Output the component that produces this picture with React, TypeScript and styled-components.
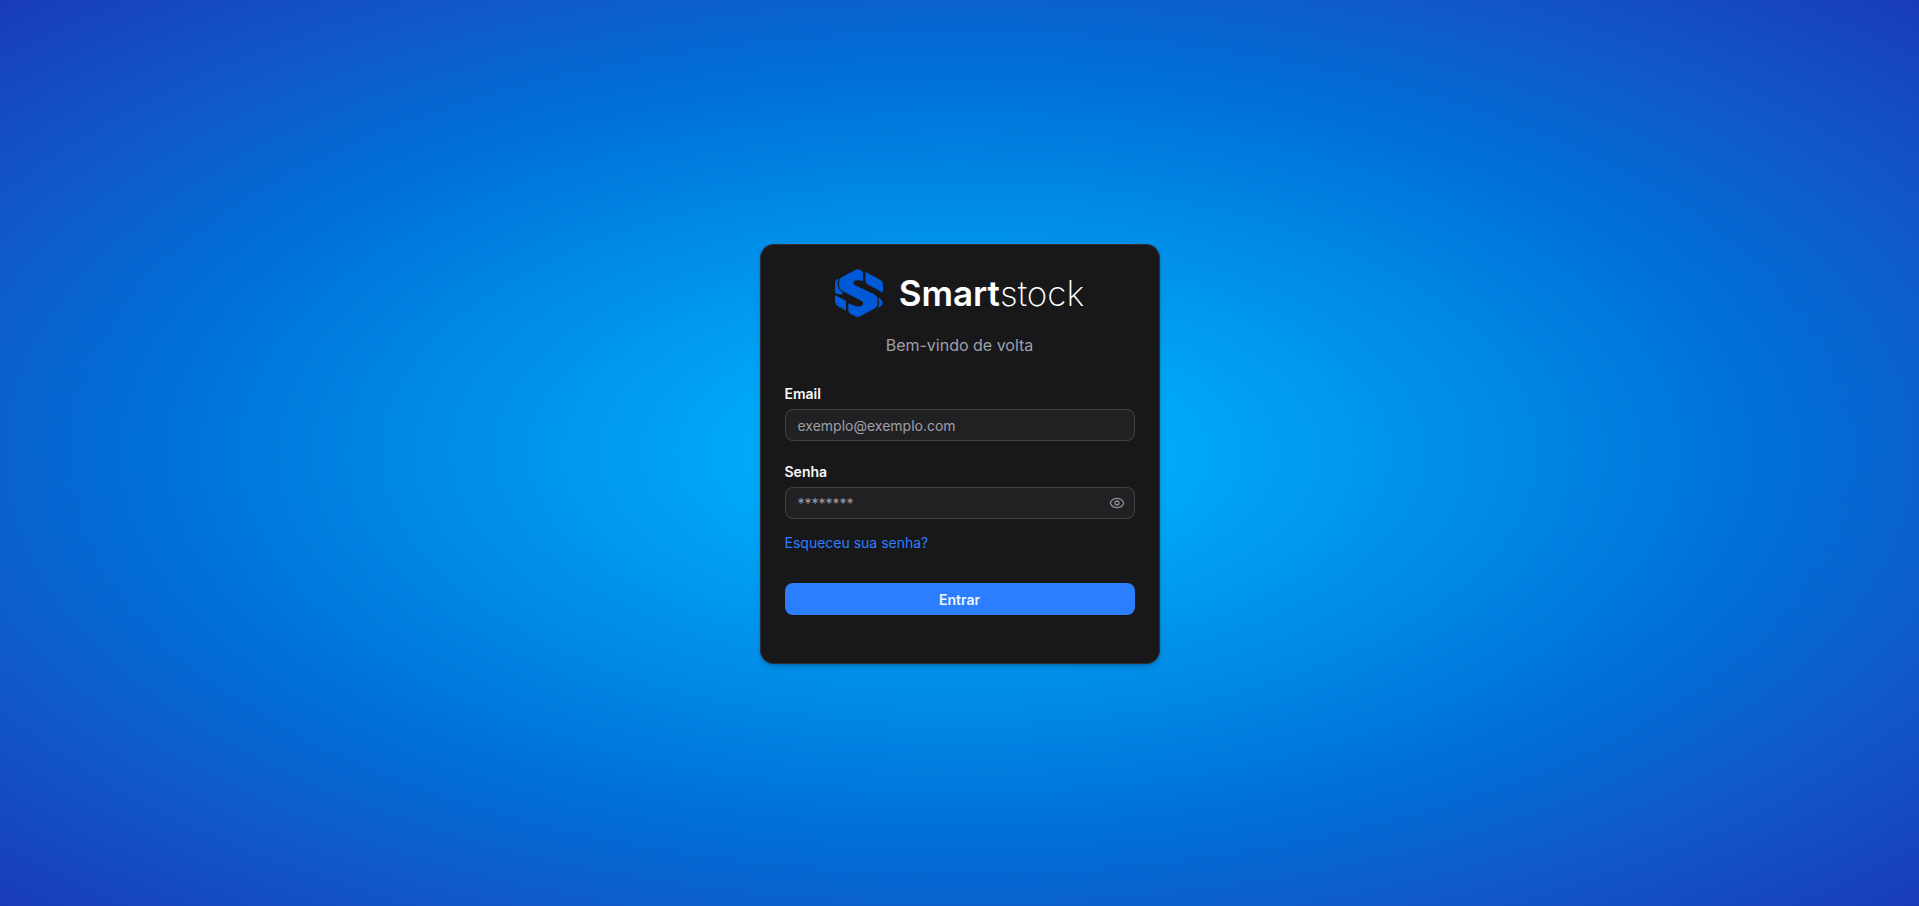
import React, { useState } from "react";
import styled, { createGlobalStyle } from "styled-components";
import { Eye, EyeOff } from "lucide-react";

const GlobalStyle = createGlobalStyle`
  *, *::before, *::after { box-sizing: border-box; }
  body { margin: 0; }
  body, input, button { font-family: Inter, "Liberation Sans", sans-serif; }
`;

const Page = styled.main`
  min-height: 100vh;
  display: flex;
  align-items: center;
  justify-content: center;
  padding: 18px 16px 16px;
  background-image: radial-gradient(
    #00bcff 0%,
    #00a9f9 15%,
    #006fd6 60%,
    #105acb 77%,
    #193cb8 100%
  );
`;

const Card = styled.section`
  width: 100%;
  max-width: 400px;
  padding: 24px 24px 48px;
  border: 1px solid rgb(255 255 255 / 10%);
  border-radius: 14px;
  background: #18181b;
  color: #fafafa;
  box-shadow: 0 1px 3px rgb(0 0 0 / 10%), 0 1px 2px rgb(0 0 0 / 10%),
    0 4px 6px rgb(0 0 0 / 10%);
`;

const Header = styled.header`
  display: flex;
  flex-direction: column;
  align-items: center;
  gap: 16px;
`;

const Brand = styled.div`
  display: flex;
  align-items: center;
  gap: 16px;
`;

const LogoMark = styled.svg`
  width: 48px;
  height: 48px;
  fill: #0059d6;
`;

const BrandName = styled.h1`
  margin: 0;
  font-size: 35px;
  line-height: 46px;
  font-weight: 200;
  color: #fff;
`;

const BrandStrong = styled.span`
  font-weight: 600;
`;

const Welcome = styled.p`
  margin: 0;
  font-size: 16px;
  line-height: 24px;
  color: #9f9fa9;
`;

const Form = styled.form`
  margin-top: 30px;
  display: flex;
  flex-direction: column;
  gap: 24px;
`;

const Field = styled.div`
  display: flex;
  flex-direction: column;
  gap: 8px;
`;

const Label = styled.label`
  font-size: 14px;
  line-height: 14px;
  font-weight: 600;
`;

const InputWrap = styled.div`
  position: relative;
`;

const Input = styled.input<{ $withToggle?: boolean }>`
  display: block;
  width: 100%;
  height: 32px;
  padding: 4px ${(p) => (p.$withToggle ? "36px" : "12px")} 4px 12px;
  border: 1px solid #434346;
  border-radius: 8px;
  background: #212123;
  color: #fafafa;
  font-size: 14px;
  outline: none;

  &::placeholder {
    color: #9f9fa9;
    opacity: 1;
  }
  &:focus-visible {
    border-color: #2b7fff;
  }
`;

const ToggleButton = styled.button`
  position: absolute;
  top: 0;
  right: 0;
  height: 100%;
  display: flex;
  align-items: center;
  padding: 0 10px;
  border: 0;
  background: transparent;
  color: #8d8d96;
  cursor: pointer;
`;

const PasswordGroup = styled.div`
  display: flex;
  flex-direction: column;
  align-items: stretch;
  gap: 14px;
`;

const ForgotLink = styled.a`
  align-self: flex-start;
  font-size: 14px;
  line-height: 20px;
  color: #2b7fff;
  text-decoration: none;
`;

const SubmitButton = styled.button`
  height: 32px;
  margin-top: 6px;
  border: 0;
  border-radius: 8px;
  background: #2b7fff;
  color: #eff6ff;
  font-size: 14px;
  font-weight: 600;
  cursor: pointer;
`;

function Logo() {
  return (
    <LogoMark viewBox="0 0 144 144" aria-hidden="true">
      <path d="M62 2Q68 -1 74 2L80 5Q84 8 84 13V36L70 34Q60 32 56 38Q53 45 60 49L118 76Q128 82 128 94V104Q128 113 120 118L76 142Q68 146 60 142L46 134Q40 130 40 125V103L58 110Q72 116 82 109Q88 101 79 95L24 67Q12 60 12 48V38Q12 29 21 24Z" />
      <path d="M91 12Q91 9 94 10L136 33Q144 38 144 47V68Q144 71 140 69L96 45Q91 42 91 37Z" />
      <path d="M11 29Q8 36 8 46Q9 62 24 72L20 76Q8 77 1 72Q0 70 0 67V41Q0 34 7 30Z" />
      <path d="M0 81Q0 79 3 80L29 93Q33 95 33 99V122Q33 125 29 123L8 111Q0 106 0 97Z" />
      <path d="M131 86Q143 92 143 103Q142 112 128 117Q132 111 132 103Z" />
    </LogoMark>
  );
}

export default function App() {
  const [visible, setVisible] = useState(false);
  return (
    <>
      <GlobalStyle />
      <Page>
        <Card>
          <Header>
            <Brand>
              <Logo />
              <BrandName>
                <BrandStrong>Smart</BrandStrong>stock
              </BrandName>
            </Brand>
            <Welcome>Bem-vindo de volta</Welcome>
          </Header>
          <Form onSubmit={(e) => e.preventDefault()}>
            <Field>
              <Label htmlFor="email">Email</Label>
              <Input id="email" type="email" placeholder="exemplo@exemplo.com" />
            </Field>
            <PasswordGroup>
              <Field>
                <Label htmlFor="password">Senha</Label>
                <InputWrap>
                  <Input
                    id="password"
                    type={visible ? "text" : "password"}
                    placeholder="********"
                    $withToggle
                  />
                  <ToggleButton
                    type="button"
                    aria-label={visible ? "Ocultar senha" : "Mostrar senha"}
                    onClick={() => setVisible(!visible)}
                  >
                    {visible ? <EyeOff size={16} /> : <Eye size={16} />}
                  </ToggleButton>
                </InputWrap>
              </Field>
              <ForgotLink href="#recuperar">Esqueceu sua senha?</ForgotLink>
            </PasswordGroup>
            <SubmitButton type="submit">Entrar</SubmitButton>
          </Form>
        </Card>
      </Page>
    </>
  );
}
